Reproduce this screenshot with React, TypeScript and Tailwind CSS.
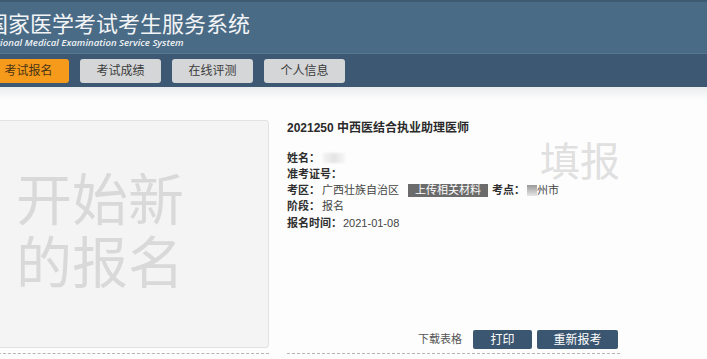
import React from "react";

const cjk = { fontFamily: '"Liberation Sans", "Noto Sans CJK SC", sans-serif' };

function NavButton({ label, active }: { label: string; active?: boolean }) {
  return (
    <div
      className={
        "w-[81px] h-[24px] rounded-[3px] flex items-center justify-center text-[12px] " +
        (active ? "bg-[#f59a1b] text-[#4a3414]" : "bg-[#d5d6d7] text-[#3c3c3c]")
      }
    >
      {label}
    </div>
  );
}

function Row({ label, children }: { label: string; children?: React.ReactNode }) {
  return (
    <div className="flex items-center h-[16.25px] text-[11px] leading-none whitespace-nowrap">
      <span className="font-bold text-[#2f2f2f]">{label}</span>
      {children}
    </div>
  );
}

export default function App() {
  return (
    <div className="w-[707px] h-[359px] overflow-hidden bg-[#fdfdfd]" style={cjk}>
      {/* header */}
      <div className="h-[53px] bg-[#4a6b86] border-t-2 border-[#3e5a71] overflow-hidden">
        <div className="-ml-[14px] pt-[11px]">
          <div className="text-[22px] leading-[24px] text-[#f2f4f6] whitespace-nowrap">
            国家医学考试考生服务系统
          </div>
          <div
            className="text-[9.6px] leading-[12px] italic font-semibold text-[#eef1f4] whitespace-nowrap -ml-[2px]"
            style={{ fontFamily: '"Open Sans", sans-serif' }}
          >
            National Medical Examination Service System
          </div>
        </div>
      </div>
      <div className="h-[34px] bg-[#3d5873] border-t border-[#56758f] flex items-center gap-[11px] -ml-[12px]">
        <NavButton label="考试报名" active />
        <NavButton label="考试成绩" />
        <NavButton label="在线评测" />
        <NavButton label="个人信息" />
      </div>
      <div className="h-[13px] bg-gradient-to-b from-[#e9ecee] to-[#fdfdfd]" />

      {/* content */}
      <div className="flex gap-[18px] -ml-[12px] pt-[20px]">
        <div className="w-[281px] pb-[5px] border-b border-dashed border-[#b5b5b5]">
          <div className="h-[228px] bg-[#f4f4f4] border border-[#e2e2e2] rounded-[3px] flex items-center pl-[27px] pb-[5px]">
            <div className="text-[56px] leading-[63px] text-[#d9d9d9]">
              开始新
              <br />
              的报名
            </div>
          </div>
        </div>

        <div className="w-[333px] relative flex flex-col pb-[4px] border-b border-dashed border-[#b5b5b5]">
          <div className="h-[229px] flex flex-col">
            <div className="text-[12px] leading-[16px] font-bold text-[#2a2a2a]">
              2021250 中西医结合执业助理医师
            </div>
            <div className="mt-[14px] flex flex-col">
              <Row label="姓名：">
                <span className="ml-[3px] w-[22px] h-[10px] bg-gradient-to-r from-[#f4f4f4] via-[#e4e4e4] to-[#f6f6f6] blur-[1px]" />
              </Row>
              <Row label="准考证号：" />
              <Row label="考区：">
                <span className="ml-[2px] text-[#444]">广西壮族自治区</span>
                <span className="ml-[9px] h-[13px] px-[7px] bg-[#6b6b6b] text-white flex items-center">
                  上传相关材料
                </span>
                <span className="ml-[4px] font-bold text-[#2f2f2f]">考点：</span>
                <span className="ml-[2px] w-[10px] h-[11px] bg-gradient-to-b from-[#9a9a9a] to-[#e8e8e8]" />
                <span className="text-[#444]">州市</span>
              </Row>
              <Row label="阶段：">
                <span className="ml-[2px] text-[#444]">报名</span>
              </Row>
              <Row label="报名时间：">
                <span className="ml-[1px] text-[#444]">2021-01-08</span>
              </Row>
            </div>
            <div className="mt-auto flex items-center justify-end gap-[5px] pr-[2px]">
              <span className="text-[11px] text-[#555] mr-[6px]">下载表格</span>
              <div className="w-[59px] h-[19px] bg-[#3b5670] rounded-[2px] text-white text-[12px] flex items-center justify-center">
                打印
              </div>
              <div className="w-[81px] h-[19px] bg-[#3b5670] rounded-[2px] text-white text-[12px] flex items-center justify-center">
                重新报考
              </div>
            </div>
          </div>
          <div className="absolute left-[253px] top-[22px] text-[40px] leading-none text-[#e0e0e0] whitespace-nowrap pointer-events-none">
            填报
          </div>
        </div>
      </div>
    </div>
  );
}
